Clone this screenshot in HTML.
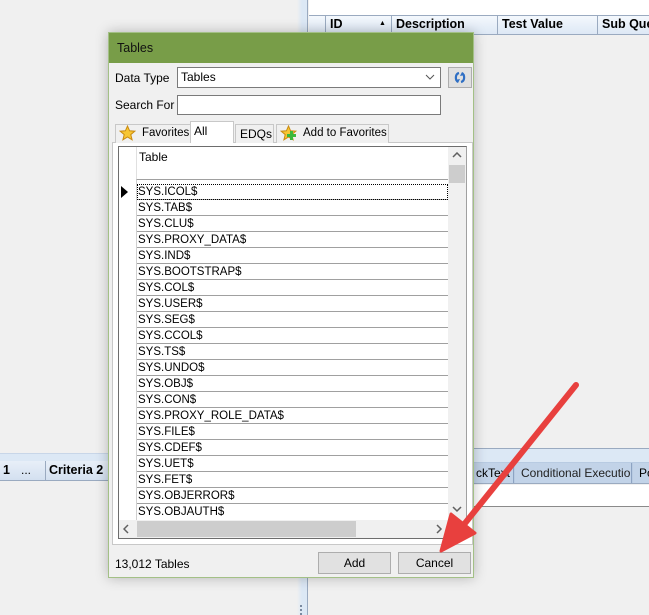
<!DOCTYPE html>
<html><head><meta charset="utf-8"><style>
*{margin:0;padding:0;box-sizing:border-box;white-space:nowrap}
body{width:649px;height:615px;background:#f0f0f0;position:relative;overflow:hidden;font-family:"Liberation Sans",Arial,sans-serif;font-size:12px;color:#000}
.a{position:absolute}
.row{position:absolute;left:137px;width:311px;height:16px;border-bottom:1px solid #a0a0a0;font-size:11.5px;line-height:16px;padding-left:1px;color:#000}
.btn{position:absolute;background:#e1e1e1;border:1px solid #adadad;text-align:center;line-height:20px;font-size:12px}
.hd{position:absolute;font-weight:bold;font-size:12.5px;top:17px}
</style></head><body>
<!-- splitter -->
<div class="a" style="left:297px;top:0;width:11px;height:615px;background:linear-gradient(90deg,#f0f0f0,#dce8f5,#dce8f5);border-right:1px solid #9aaac0"></div>
<div class="a" style="left:300px;top:605px;width:3px;height:10px;border-left:2px dotted #7a8aa0"></div>
<!-- right top -->
<div class="a" style="left:309px;top:0;width:340px;height:15px;background:#fff"></div>
<div class="a" style="left:309px;top:15px;width:340px;height:20px;background:linear-gradient(#f4f8fd,#dde8f5);border-top:1px solid #9aaac0;border-bottom:1px solid #9aaac0;overflow:hidden"></div>
<div class="a" style="left:325px;top:16px;width:1px;height:18px;background:#9aaac0"></div>
<div class="a" style="left:391px;top:16px;width:1px;height:18px;background:#9aaac0"></div>
<div class="a" style="left:497px;top:16px;width:1px;height:18px;background:#9aaac0"></div>
<div class="a" style="left:597px;top:16px;width:1px;height:18px;background:#9aaac0"></div>
<div class="hd" style="left:330px">ID</div>
<div class="a" style="left:379px;top:20px;font-size:7px">▲</div>
<div class="hd" style="left:396px">Description</div>
<div class="hd" style="left:502px">Test Value</div>
<div class="hd" style="left:602px">Sub Que</div>
<!-- bottom left header -->
<div class="a" style="left:0;top:453px;width:297px;height:8px;background:#dce8f5;border-top:1px solid #c8d6e8"></div>
<div class="a" style="left:0;top:461px;width:297px;height:20px;background:linear-gradient(#e8eff8,#d3e0f0);border-bottom:1px solid #9aaac0"></div>
<div class="hd" style="left:3px;top:463px">1</div>
<div class="a" style="left:21px;top:463px">...</div>
<div class="a" style="left:45px;top:461px;width:1px;height:20px;background:#9aaac0"></div>
<div class="hd" style="left:49px;top:463px">Criteria 2</div>
<!-- bottom right tabs -->
<div class="a" style="left:309px;top:448px;width:340px;height:14px;background:#dce8f5;border-top:1px solid #9aaac0"></div>
<div class="a" style="left:309px;top:462px;width:340px;height:22px;background:#b8cbe2;border-bottom:1px solid #9aaac0"></div>
<div class="a" style="left:474px;top:463px;width:40px;height:20px;background:#c2d3e8;border-right:1px solid #8da3c2;font-size:12px;line-height:20px;padding-left:2px;overflow:hidden">ckText</div>
<div class="a" style="left:515px;top:463px;width:117px;height:20px;background:#c2d3e8;border-right:1px solid #8da3c2;font-size:12px;line-height:20px;padding-left:6px;color:#222;overflow:hidden">Conditional Execution</div>
<div class="a" style="left:633px;top:463px;width:20px;height:20px;background:#c2d3e8;font-size:12px;line-height:20px;padding-left:6px;overflow:hidden">Po</div>
<div class="a" style="left:309px;top:485px;width:340px;height:22px;background:#fff;border-bottom:1px solid #8a8a8a"></div>
<!-- dialog -->
<div class="a" style="left:108px;top:32px;width:366px;height:546px;background:#f0f0f0;border:1px solid #a3c086;box-shadow:0 0 12px rgba(0,0,0,.25)"></div>
<div class="a" style="left:109px;top:33px;width:364px;height:30px;background:#789d48;font-size:12.5px;line-height:30px;padding-left:8px;color:#111">Tables</div>
<div class="a" style="left:115px;top:71px">Data Type</div>
<div class="a" style="left:177px;top:67px;width:264px;height:21px;background:#fff;border:1px solid #7a7a7a;padding-left:3px;line-height:19px">Tables</div>
<svg class="a" style="left:425px;top:73px" width="10" height="8"><path d="M1 2 L5 6 L9 2" stroke="#555" fill="none" stroke-width="1"/></svg>
<div class="a" style="left:448px;top:67px;width:24px;height:21px;background:#e0e0e0;border:1px solid #adadad"></div>
<svg class="a" style="left:453px;top:70px" width="14" height="15"><path d="M6 3 C2 4 2 10 5 12" stroke="#2f6fc4" stroke-width="2.2" fill="none"/><path d="M2 10 L5 13 L7 9Z" fill="#2f6fc4"/><path d="M8 12 C12 11 12 5 9 3" stroke="#2f6fc4" stroke-width="2.2" fill="none"/><path d="M12 5 L9 2 L7 6Z" fill="#2f6fc4"/></svg>
<div class="a" style="left:115px;top:98px">Search For</div>
<div class="a" style="left:177px;top:95px;width:264px;height:20px;background:#fff;border:1px solid #7a7a7a"></div>
<!-- tabs -->
<div class="a" style="left:112px;top:142px;width:361px;height:403px;border:1px solid #c8c8c8;background:#fff"></div>
<div class="a" style="left:115px;top:124px;width:76px;height:19px;background:#f0f0f0;border:1px solid #c8c8c8;border-bottom:none"></div>
<svg class="a" style="left:119px;top:125px" width="17" height="16"><path d="M8.5 1 L10.6 5.8 L15.8 6.2 L11.8 9.6 L13.1 14.8 L8.5 12 L3.9 14.8 L5.2 9.6 L1.2 6.2 L6.4 5.8Z" fill="#f7c633" stroke="#c98a10" stroke-width="1"/></svg>
<div class="a" style="left:142px;top:127px;font-size:11.5px">Favorites</div>
<div class="a" style="left:190px;top:121px;width:44px;height:22px;background:#fff;border:1px solid #c8c8c8;border-bottom:none;padding-left:3px;line-height:18px">All</div>
<div class="a" style="left:235px;top:124px;width:39px;height:19px;background:#f0f0f0;border:1px solid #c8c8c8;border-bottom:none;padding-left:4px;line-height:18px">EDQs</div>
<div class="a" style="left:276px;top:124px;width:113px;height:19px;background:#f0f0f0;border:1px solid #c8c8c8;border-bottom:none"></div>
<svg class="a" style="left:280px;top:125px" width="18" height="16"><path d="M8.5 1 L10.6 5.8 L15.8 6.2 L11.8 9.6 L13.1 14.8 L8.5 12 L3.9 14.8 L5.2 9.6 L1.2 6.2 L6.4 5.8Z" fill="#f7c633" stroke="#c98a10"/><path d="M11 8 h3 v3 h3 v3 h-3 v3 h-3 v-3 h-3 v-3 h3z" fill="#3cb83c" transform="translate(-1,-2)"/></svg>
<div class="a" style="left:303px;top:127px;font-size:11.5px">Add to Favorites</div>
<!-- grid -->
<div class="a" style="left:118px;top:146px;width:349px;height:393px;border:1px solid #6d6d6d;border-right-color:#a0a0a0;background:#fff"></div>
<div class="a" style="left:136px;top:147px;width:312px;height:33px;border-bottom:1px solid #a0a0a0;border-left:1px solid #e0e0e0"></div>
<div class="a" style="left:139px;top:150px">Table</div>
<div class="a" style="left:136px;top:180px;width:1px;height:340px;background:#d0d0d0"></div>
<div class="a" style="left:448px;top:147px;width:18px;height:373px;background:#f0f0f0"></div>
<div class="a" style="left:449px;top:165px;width:16px;height:18px;background:#cdcdcd"></div>
<svg class="a" style="left:452px;top:152px" width="10" height="7"><path d="M1 5 L5 1 L9 5" stroke="#606060" fill="none" stroke-width="1.5"/></svg>
<svg class="a" style="left:452px;top:506px" width="10" height="7"><path d="M1 1 L5 5 L9 1" stroke="#606060" fill="none" stroke-width="1.5"/></svg>
<div class="a" style="left:119px;top:520px;width:347px;height:18px;background:#f0f0f0"></div>
<div class="a" style="left:137px;top:521px;width:219px;height:16px;background:#cdcdcd"></div>
<svg class="a" style="left:123px;top:524px" width="7" height="10"><path d="M5 1 L1 5 L5 9" stroke="#606060" fill="none" stroke-width="1.5"/></svg>
<svg class="a" style="left:436px;top:524px" width="7" height="10"><path d="M1 1 L5 5 L1 9" stroke="#606060" fill="none" stroke-width="1.5"/></svg>
<div class="a" style="left:121px;top:186px;width:0;height:0;border-top:6px solid transparent;border-bottom:6px solid transparent;border-left:7px solid #000"></div>
<div class="row" style="top:184px;outline:1px dotted #000;outline-offset:-1px">SYS.ICOL$</div>
<div class="row" style="top:200px">SYS.TAB$</div>
<div class="row" style="top:216px">SYS.CLU$</div>
<div class="row" style="top:232px">SYS.PROXY_DATA$</div>
<div class="row" style="top:248px">SYS.IND$</div>
<div class="row" style="top:264px">SYS.BOOTSTRAP$</div>
<div class="row" style="top:280px">SYS.COL$</div>
<div class="row" style="top:296px">SYS.USER$</div>
<div class="row" style="top:312px">SYS.SEG$</div>
<div class="row" style="top:328px">SYS.CCOL$</div>
<div class="row" style="top:344px">SYS.TS$</div>
<div class="row" style="top:360px">SYS.UNDO$</div>
<div class="row" style="top:376px">SYS.OBJ$</div>
<div class="row" style="top:392px">SYS.CON$</div>
<div class="row" style="top:408px">SYS.PROXY_ROLE_DATA$</div>
<div class="row" style="top:424px">SYS.FILE$</div>
<div class="row" style="top:440px">SYS.CDEF$</div>
<div class="row" style="top:456px">SYS.UET$</div>
<div class="row" style="top:472px">SYS.FET$</div>
<div class="row" style="top:488px">SYS.OBJERROR$</div>
<div class="row" style="top:504px;border-bottom:none">SYS.OBJAUTH$</div>
<!-- footer -->
<div class="a" style="left:115px;top:557px">13,012 Tables</div>
<div class="btn" style="left:318px;top:552px;width:73px;height:22px">Add</div>
<div class="btn" style="left:398px;top:552px;width:73px;height:22px">Cancel</div>
<!-- arrow -->
<svg class="a" style="left:0;top:0" width="649" height="615"><line x1="576" y1="385" x2="462" y2="527" stroke="#e8403e" stroke-width="6" stroke-linecap="round"/><path d="M441 551 L451 514 L475 533Z" fill="#e8403e" stroke="#e8403e" stroke-width="3" stroke-linejoin="round"/></svg>
</body></html>
